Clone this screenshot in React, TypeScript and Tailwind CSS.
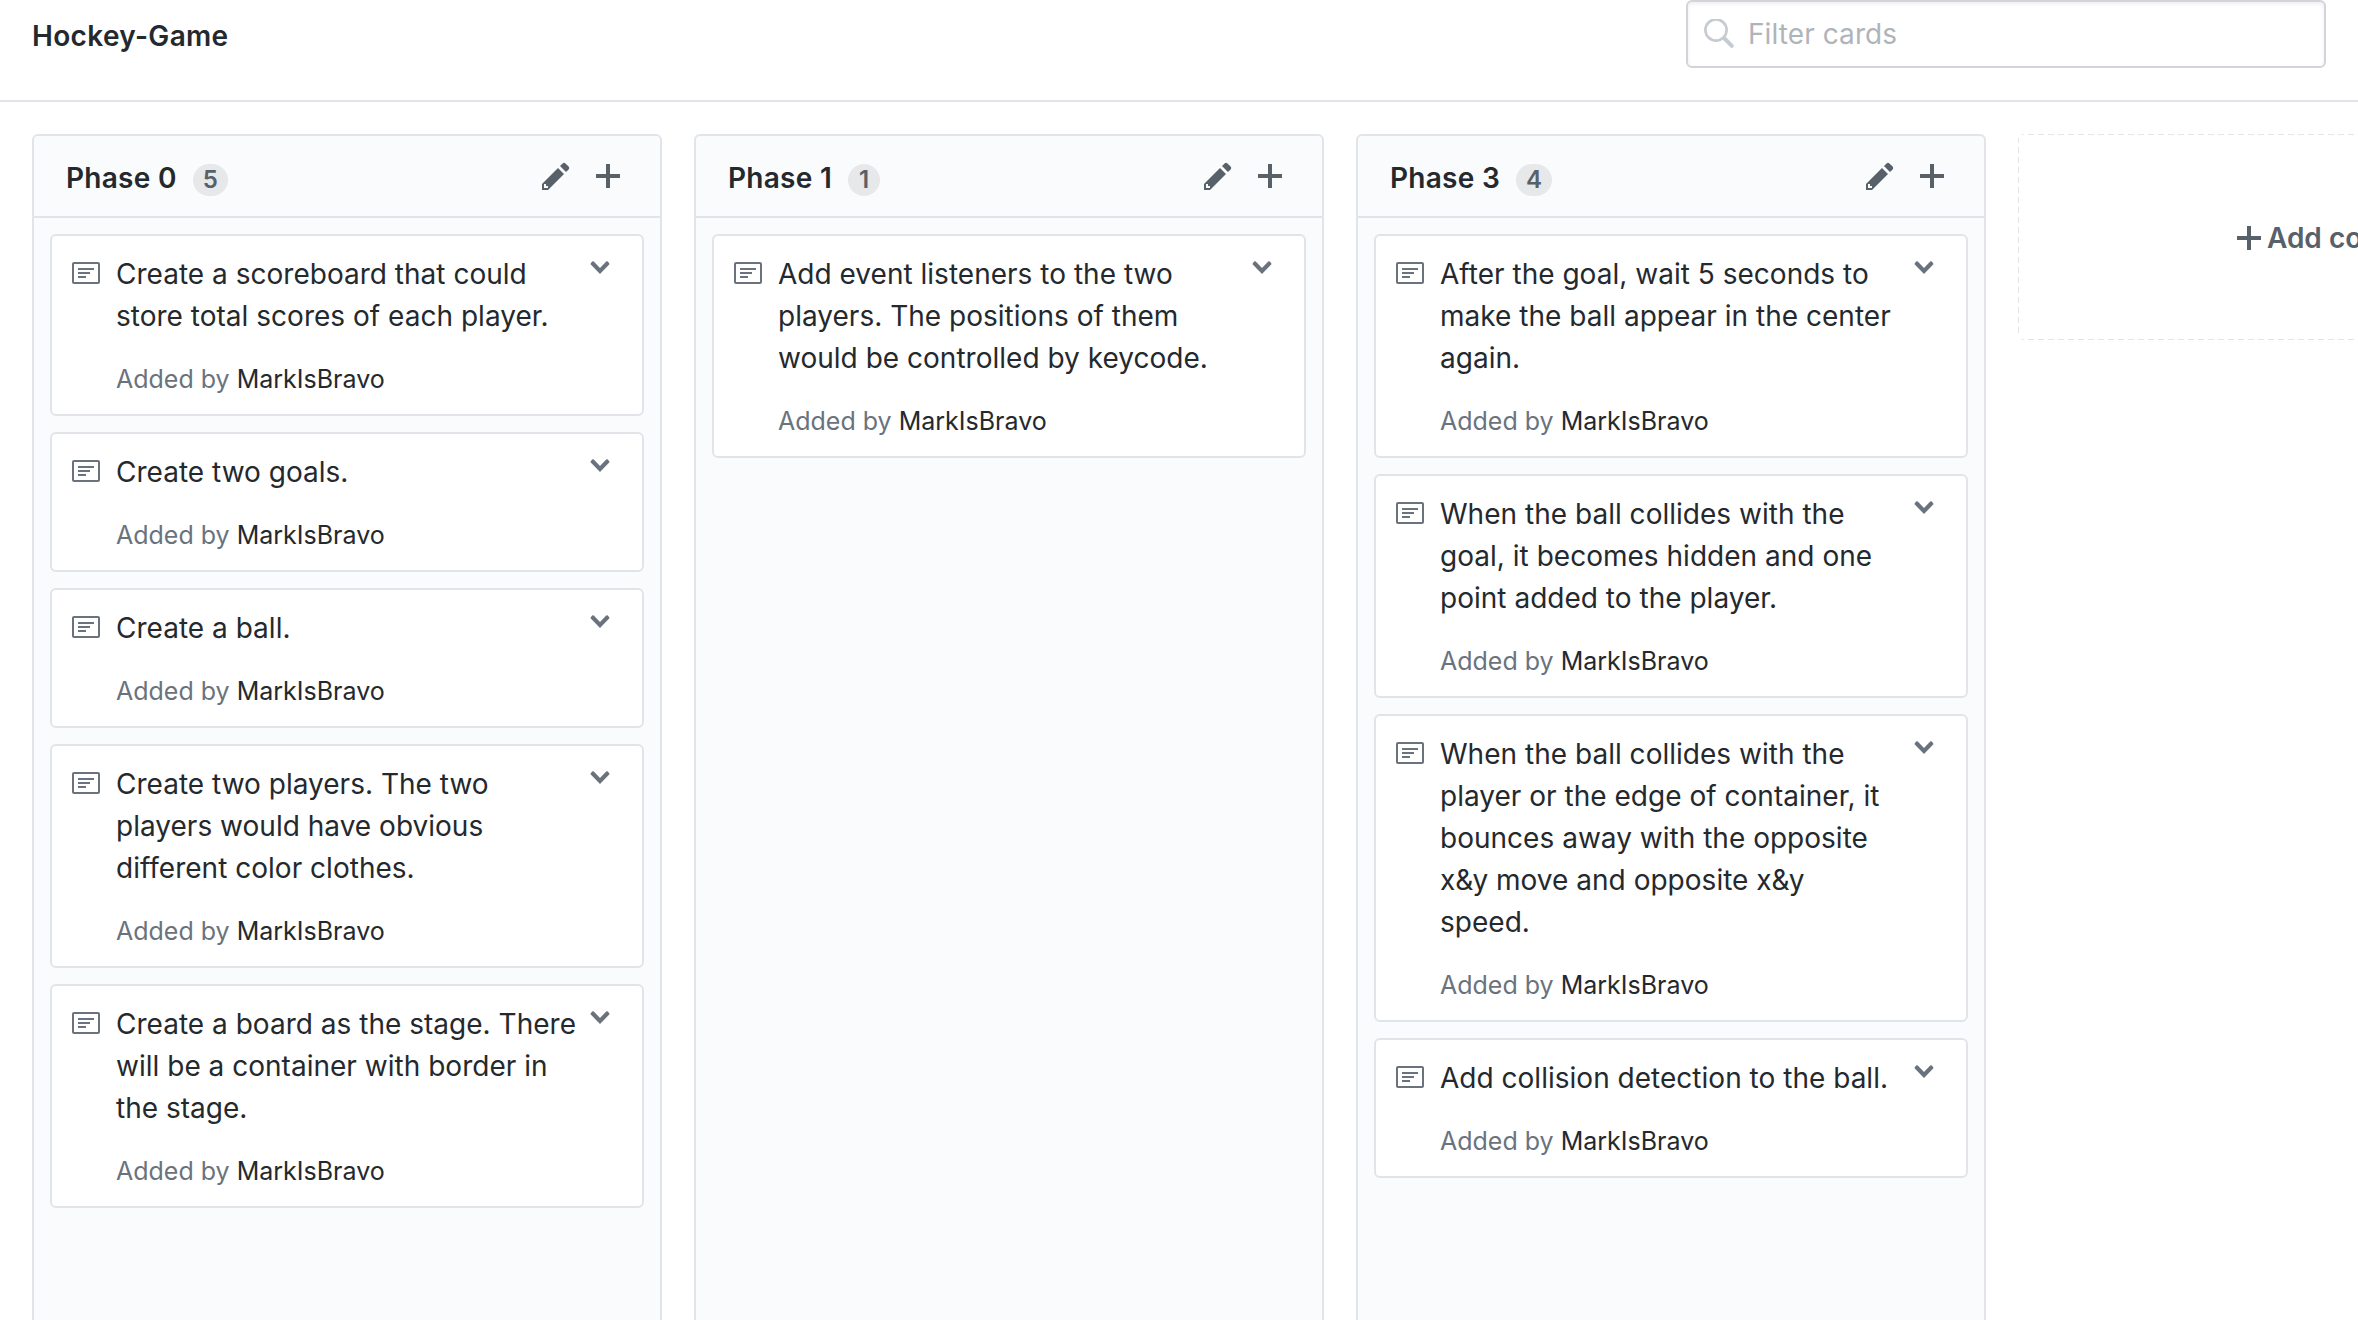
import React from "react";

type IconProps = { d: string; w: number; className?: string };
const Icon = ({ d, w, className = "" }: IconProps) => (
  <svg viewBox={`0 0 ${w} 16`} width={w * 2} height={32} fill="currentColor" className={`shrink-0 ${className}`} aria-hidden="true">
    <path fillRule="evenodd" d={d} />
  </svg>
);

const NOTE = "M3 10h4V9H3v1zm0-2h6V7H3v1zm0-2h8V5H3v1zm10 6H1V3h12v9zM1 2c-.55 0-1 .45-1 1v9c0 .55.45 1 1 1h12c.55 0 1-.45 1-1V3c0-.55-.45-1-1-1H1z";
const PENCIL = "M0 12v3h3l8-8-3-3-8 8zm3 2H1v-2h1v1h1v1zm10.3-9.3L12 6 9 3l1.3-1.3a.996.996 0 0 1 1.41 0l1.59 1.59c.39.39.39 1.02 0 1.41z";
const PLUS = "M12 9H7v5H5V9H0V7h5V2h2v5h5v2z";
const CHEVRON = "M5 11L.4 6.3q-.3-.35 0-.7l.7-.8q.4-.35.8 0L5 8 8.1 4.8q.4-.35.8 0l.7.8q.3.35 0 .7L5 11z";

const columns = [
  {
    name: "Phase 0",
    cards: [
      ["Create a scoreboard that could", "store total scores of each player."],
      ["Create two goals."],
      ["Create a ball."],
      ["Create two players. The two", "players would have obvious", "different color clothes."],
      ["Create a board as the stage. There", "will be a container with border in", "the stage."],
    ],
  },
  {
    name: "Phase 1",
    cards: [["Add event listeners to the two", "players. The positions of them", "would be controlled by keycode."]],
  },
  {
    name: "Phase 3",
    cards: [
      ["After the goal, wait 5 seconds to", "make the ball appear in the center", "again."],
      ["When the ball collides with the", "goal, it becomes hidden and one", "point added to the player."],
      ["When the ball collides with the", "player or the edge of container, it", "bounces away with the opposite", "x&y move and opposite x&y", "speed."],
      ["Add collision detection to the ball."],
    ],
  },
];

const Card = ({ lines }: { lines: string[] }) => (
  <article className="flex rounded-md border-2 border-[#e1e4e8] bg-white pt-4 pb-3.5 pl-5 pr-8">
    <Icon d={NOTE} w={14} className="mt-1.5 text-[#6a737d]" />
    <div className="ml-4 min-w-0 flex-1 whitespace-nowrap pt-px">
      <p className="text-[28px] leading-[42px] tracking-[0.0006em] text-[#24292e]">
        {lines.map((line) => (
          <span key={line} className="block">{line}</span>
        ))}
      </p>
      <p className="mt-[21px] text-[25px] leading-[42px] text-[#6a737d]">
        Added by <a className="text-[#24292e]">MarkIsBravo</a>
      </p>
    </div>
    <Icon d={CHEVRON} w={10} className="text-[#6a737d]" />
  </article>
);

export default function App() {
  return (
    <div className="flex h-[1320px] w-full flex-col overflow-hidden bg-white font-['Inter','Liberation_Sans',sans-serif] text-[#24292e]">
      <header className="flex h-[102px] shrink-0 items-start justify-between border-b-2 border-[#e1e4e8] pl-8 pr-8">
        <h1 className="mt-[15px] text-[28px] font-semibold leading-[42px] tracking-[0.012em]">Hockey-Game</h1>
        <div className="flex h-[68px] w-[640px] items-center rounded-md border-2 border-[#d1d5da] bg-white pl-4 shadow-[inset_0_2px_4px_rgba(27,31,35,0.075)]">
          <svg viewBox="0 0 30 30" width="30" height="30" fill="none" stroke="#c6cbd1" strokeWidth="2.6" strokeLinecap="round" className="shrink-0">
            <circle cx="12" cy="11" r="10.6" />
            <path d="M20.5 19.5l7.3 7.3" strokeWidth="4" />
          </svg>
          <span className="ml-[14px] text-[28px] leading-[42px] tracking-[0.003em] text-[#afb4b9]">Filter cards</span>
        </div>
      </header>
      <main className="flex min-h-0 flex-1 items-start gap-8 pl-8 pt-8">
        {columns.map((col) => (
          <section key={col.name} className="h-[1220px] w-[630px] shrink-0 rounded-md border-2 border-[#e1e4e8] bg-[#fafbfc]">
            <div className="flex h-[82px] items-start border-b-2 border-[#e1e4e8] pl-8 pr-10 pt-6">
              <h2 className="text-[28px] font-semibold leading-[36px] tracking-[0.01em]">{col.name}</h2>
              <span className="ml-4 mt-1 flex h-8 min-w-8 items-center justify-center rounded-full bg-[#e7e8ea] px-2.5 text-[24px] font-semibold leading-8 text-[#586069]">{col.cards.length}</span>
              <div className="ml-auto flex gap-[26px] text-[#586069]">
                <Icon d={PENCIL} w={14} />
                <Icon d={PLUS} w={12} />
              </div>
            </div>
            <div className="flex flex-col gap-4 p-4">
              {col.cards.map((lines, i) => (
                <Card key={i} lines={lines} />
              ))}
            </div>
          </section>
        ))}
        <button className="flex h-[206px] w-[630px] shrink-0 items-center justify-center rounded-md bg-[repeating-linear-gradient(90deg,#e1e4e8_0_6px,transparent_6px_10px),repeating-linear-gradient(90deg,#e1e4e8_0_6px,transparent_6px_10px),repeating-linear-gradient(180deg,transparent_0_3px,#e1e4e8_3px_9px,transparent_9px_10px)] bg-[length:100%_1px,100%_1px,1px_100%] bg-[position:0_0,0_100%,0_0] bg-no-repeat text-[28px] font-semibold leading-[42px] text-[#586069]">
          <Icon d={PLUS} w={12} className="mt-0.5" />
          <span className="ml-1.5 pt-0.5">Add column</span>
        </button>
      </main>
    </div>
  );
}
